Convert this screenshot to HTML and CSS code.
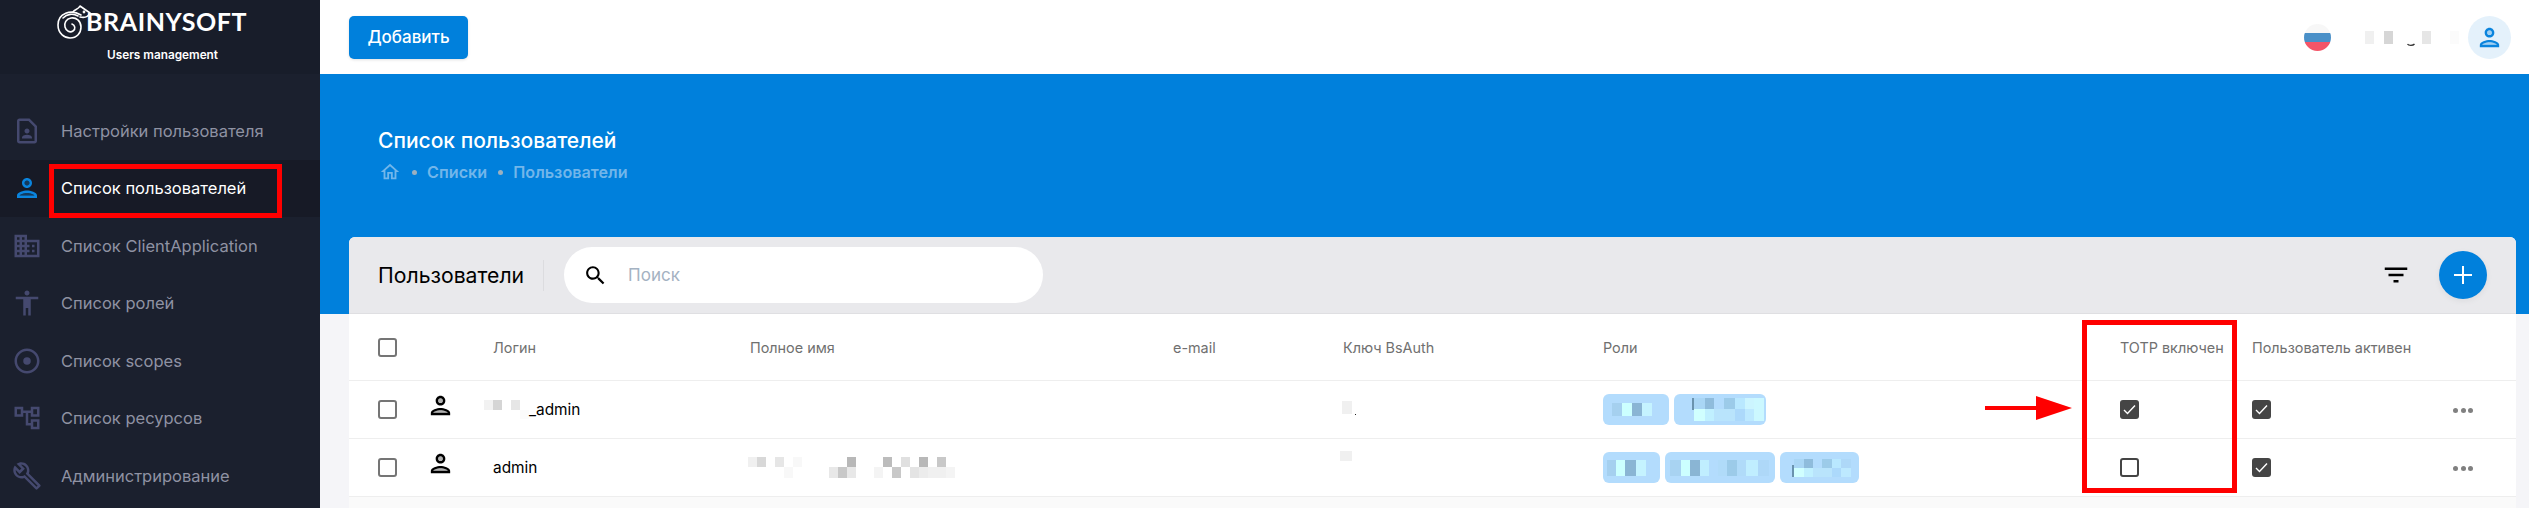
FILE: index.html
```html
<!DOCTYPE html>
<html lang="en">
<head>
<meta charset="UTF-8" />
<meta name="viewport" content="width=device-width, initial-scale=1" />
<title>Users management</title>
<link rel="stylesheet" href="styles.css">
</head>
<body>
<aside class="sidebar">
  <div class="logo">
    <div class="brand">
      <svg class="brand-mark" viewBox="0 0 34 34" width="34" height="34" fill="none" stroke="#fff" stroke-width="1.6" stroke-linecap="round" stroke-linejoin="round">
        <path d="M24 10C14 4 1 8 1 20c0 9 7 13 12 13 7 0 11-5 11-11 0-6-5-10-10-9-5 1-7 5-6 9 1 4 5 6 8 4 3-2 2-6-1-7" />
        <path d="M6 13c4-4 10-5 15-2" />
        <path d="M16 7c2-3 5-2 7-6l10 7c-2 4-6 5-10 4" />
        <circle cx="27" cy="7" r=".6" />
      </svg>
      <span class="brand-name">BRAINYSOFT</span>
    </div>
    <div class="brand-sub">Users management</div>
  </div>
  <nav class="nav">
    <a class="nav-item">
      <svg class="nav-icon" viewBox="0 0 24 24"><path d="M14 2H6c-1.100 0-2 .9-2 2v16c0 1.100.9 2 2 2h12c1.100 0 2-.9 2-2V8l-6-6zm4 18H6V4h7.170L18 8.830V20zm-6-6c1.100 0 2-.9 2-2s-.9-2-2-2-2 .9-2 2 .9 2 2 2zm4 3.430c0-.81-.48-1.530-1.220-1.850-.85-.37-1.790-.58-2.780-.58s-1.930.21-2.780.58C8.480 15.900 8 16.620 8 17.430V18h8v-.57z" /></svg>
      Настройки пользователя
    </a>
    <a class="nav-item nav-item-active">
      <svg class="nav-icon" viewBox="0 0 24 24"><use href="#person" /></svg>
      Список пользователей
      <span class="mark mark-nav"></span>
    </a>
    <a class="nav-item">
      <svg class="nav-icon" viewBox="0 0 24 24"><path d="M12 7V3H2v18h20V7H12zM6 19H4v-2h2v2zm0-4H4v-2h2v2zm0-4H4V9h2v2zm0-4H4V5h2v2zm4 12H8v-2h2v2zm0-4H8v-2h2v2zm0-4H8V9h2v2zm0-4H8V5h2v2zm10 12h-8v-2h2v-2h-2v-2h2v-2h-2V9h8v10zm-2-8h-2v2h2v-2zm0 4h-2v2h2v-2z" /></svg>
      Список ClientApplication
    </a>
    <a class="nav-item">
      <svg class="nav-icon" viewBox="0 0 24 24"><path d="M12 2c1.100 0 2 .9 2 2s-.9 2-2 2-2-.9-2-2 .9-2 2-2zm9 7h-6v13h-2v-6h-2v6H9V9H3V7h18v2z" /></svg>
      Список ролей
    </a>
    <a class="nav-item">
      <svg class="nav-icon" viewBox="0 0 24 24"><path d="M12 2C6.480 2 2 6.480 2 12s4.480 10 10 10 10-4.480 10-10S17.520 2 12 2zm0 18c-4.420 0-8-3.580-8-8s3.580-8 8-8 8 3.580 8 8-3.580 8-8 8z" /><circle cx="12" cy="12" r="3" /></svg>
      Список scopes
    </a>
    <a class="nav-item">
      <svg class="nav-icon" viewBox="0 0 24 24"><path d="M22 11V3h-7v3H9V3H2v8h7V8h2v10h4v3h7v-8h-7v3h-2V8h2v3h7zM7 9H4V5h3v4zm10 6h3v4h-3v-4zm0-10h3v4h-3V5z" /></svg>
      Список ресурсов
    </a>
    <a class="nav-item">
      <svg class="nav-icon" viewBox="0 0 24 24"><path d="M22.610 18.990l-9.080-9.080c.93-2.340.45-5.100-1.440-7C9.790.61 6.210.4 3.660 2.250L7.500 6.080 6.080 7.490 2.260 3.670C.41 6.210.62 9.790 2.920 12.080c1.860 1.860 4.570 2.350 6.890 1.480l9.110 9.110c.39.39 1.020.39 1.410 0l2.300-2.300c.4-.38.4-1.010-.02-1.380zm-3 1.600l-9.460-9.460c-.61.45-1.290.72-2 .82-1.360.2-2.790-.21-3.830-1.250C3.370 9.760 2.930 8.500 3 7.260l3.090 3.090 4.240-4.240-3.090-3.090c1.240-.07 2.490.37 3.440 1.310 1.080 1.080 1.490 2.570 1.240 3.960-.12.71-.42 1.370-.88 1.960l9.450 9.450-.88.88z" /></svg>
      Администрирование
    </a>
  </nav>
</aside>

<svg class="defs" width="0" height="0">
  <defs>
    <g id="person">
      <circle cx="12" cy="8" r="2" opacity=".3" />
      <path d="M12 16c-2.700 0-5.800 1.290-6 2h12c-.2-.71-3.300-2-6-2z" opacity=".3" />
      <path d="M12 4C9.790 4 8 5.790 8 8s1.790 4 4 4 4-1.790 4-4-1.790-4-4-4zm0 6c-1.100 0-2-.9-2-2s.9-2 2-2 2 .9 2 2-.9 2-2 2zm0 4c-2.670 0-8 1.340-8 4v2h16v-2c0-2.660-5.330-4-8-4zm-6 4c.23-.72 3.310-2 6-2 2.700 0 5.800 1.290 6 2H6z" />
    </g>
  </defs>
</svg>

<main class="main">
  <header class="topbar">
    <button class="add-btn">Добавить</button>
    <div class="topbar-right">
      <div class="flag"></div>
      <svg class="mosaic" width="94" height="16" shape-rendering="crispEdges">
        <rect x="0" y="0" width="9" height="13" fill="#f0f0f0" />
        <rect x="19" y="0" width="9" height="13" fill="#d6d6d6" />
        <rect x="57" y="0" width="9" height="13" fill="#e6e6e6" />
        <rect x="85" y="0" width="9" height="13" fill="#fbfbfb" />
        <path d="M42.500 13c1 1.800 5.500 1.800 7 0" fill="none" stroke="#333" stroke-width="1.300" shape-rendering="auto" />
      </svg>
      <div class="avatar">
        <svg class="avatar-icon" viewBox="0 0 24 24"><use href="#person" /></svg>
      </div>
    </div>
  </header>

  <section class="hero">
    <h1 class="hero-title">Список пользователей</h1>
    <div class="crumbs">
      <svg class="crumb-home" viewBox="0 0 24 24"><path d="M12 5.690l5 4.500V18h-2v-6H9v6H7v-7.810l5-4.500M12 3L2 12h3v8h6v-6h2v6h6v-8h3L12 3z" /></svg>
      <span class="crumb-dot"></span>
      <span>Списки</span>
      <span class="crumb-dot"></span>
      <span>Пользователи</span>
    </div>
  </section>

  <section class="card">
    <div class="toolbar">
      <h2 class="toolbar-title">Пользователи</h2>
      <div class="search">
        <svg class="search-icon" viewBox="0 0 24 24"><path d="M15.500 14h-.79l-.28-.27C15.410 12.590 16 11.110 16 9.500 16 5.910 13.090 3 9.500 3S3 5.910 3 9.500 5.910 16 9.500 16c1.610 0 3.090-.59 4.230-1.570l.27.28v.79l5 4.990L20.490 19l-4.990-5zm-6 0C7.010 14 5 11.990 5 9.500S7.010 5 9.500 5 14 7.010 14 9.500 11.990 14 9.500 14z" /></svg>
        <span class="search-text">Поиск</span>
      </div>
      <svg class="filter-icon" viewBox="0 0 24 24"><path d="M10 18h4v-2h-4v2zM3 6v2h18V6H3zm3 7h12v-2H6v2z" /></svg>
      <button class="fab">
        <svg width="18" height="18" viewBox="0 0 18 18" stroke="#fff" stroke-width="2"><path d="M9 0v18M0 9h18" /></svg>
      </button>
    </div>

    <div class="table">
      <div class="row row-head">
        <span class="check"></span>
        <span></span>
        <span>Логин</span>
        <span>Полное имя</span>
        <span>e-mail</span>
        <span>Ключ BsAuth</span>
        <span>Роли</span>
        <span>TOTP включен</span>
        <span>Пользователь активен</span>
        <span></span>
      </div>

      <div class="row">
        <span class="check"></span>
        <svg class="row-icon" viewBox="0 0 24 24"><use href="#person" /></svg>
        <span class="login login-masked">
          <svg width="45" height="20" shape-rendering="crispEdges">
            <rect x="0" y="0" width="9" height="10" fill="#f2f2f2" />
            <rect x="9" y="0" width="9" height="10" fill="#d5d5d5" />
            <rect x="27" y="0" width="9" height="10" fill="#e6e6e6" />
            <rect x="36" y="10" width="9" height="9" fill="#fbfbfb" />
          </svg>_admin
        </span>
        <span></span>
        <span></span>
        <svg class="key-mosaic" width="16" height="14" shape-rendering="crispEdges">
          <rect x="0" y="0" width="10" height="13" fill="#f0f0f0" />
          <rect x="13" y="13" width="1" height="1" fill="#222" />
        </svg>
        <div class="tags">
          <span class="tag tag-w66">
            <svg width="40" height="13" shape-rendering="crispEdges">
              <rect x="0" width="10" height="13" fill="#a5d0ef" />
              <rect x="10" width="10" height="13" fill="#ccffff" />
              <rect x="20" width="10" height="13" fill="#8ab5d4" />
              <rect x="30" width="10" height="13" fill="#c5f3ff" />
            </svg>
          </span>
          <span class="tag tag-w92">
            <svg width="81" height="23" shape-rendering="crispEdges">
              <rect x="9" width="2" height="12" fill="#6a93ae" />
              <rect x="11" width="11" height="11" fill="#a9d6f5" />
              <rect x="22" width="9" height="11" fill="#8fbcdc" />
              <rect x="41" width="11" height="11" fill="#9ccbe9" />
              <rect x="52" width="10" height="11" fill="#b9e8ff" />
              <rect x="62" width="9" height="11" fill="#ccf5ff" />
              <rect x="71" width="10" height="23" fill="#ccf8ff" />
              <rect x="11" y="11" width="11" height="12" fill="#d0ffff" />
              <rect x="22" y="11" width="9" height="12" fill="#c0f0ff" />
              <rect x="31" y="11" width="21" height="12" fill="#b9e4fc" />
              <rect x="52" y="11" width="10" height="12" fill="#acd9fb" />
              <rect x="62" y="11" width="9" height="12" fill="#bde9ff" />
            </svg>
          </span>
        </div>
        <span class="check check-on"><svg viewBox="0 0 19 19" fill="none" stroke="#fff" stroke-width="1.400"><path d="M4 10l3.500 3.500L15 5.500" /></svg></span>
        <span class="check check-on"><svg viewBox="0 0 19 19" fill="none" stroke="#fff" stroke-width="1.400"><path d="M4 10l3.500 3.500L15 5.500" /></svg></span>
        <span class="dots"><i></i><i></i><i></i></span>
      </div>

      <div class="row">
        <span class="check"></span>
        <svg class="row-icon" viewBox="0 0 24 24"><use href="#person" /></svg>
        <span class="login">admin</span>
        <svg class="name-mosaic" width="207" height="21" shape-rendering="crispEdges">
          <rect x="0" width="9" height="10" fill="#f0f0f0" />
          <rect x="9" width="9" height="10" fill="#d8d8d8" />
          <rect x="27" width="9" height="10" fill="#e6e6e6" />
          <rect x="45" width="9" height="10" fill="#f8f8f8" />
          <rect x="99" width="9" height="10" fill="#b8b8b8" />
          <rect x="135" width="9" height="10" fill="#bcbcbc" />
          <rect x="153" width="9" height="10" fill="#e0e0e0" />
          <rect x="171" width="9" height="10" fill="#b8b8b8" />
          <rect x="189" width="9" height="10" fill="#c8c8c8" />
          <rect x="36" y="10" width="9" height="11" fill="#f8f8f8" />
          <rect x="81" y="10" width="9" height="11" fill="#e8e8e8" />
          <rect x="90" y="10" width="9" height="11" fill="#c8c8c8" />
          <rect x="99" y="10" width="9" height="11" fill="#e8e8e8" />
          <rect x="126" y="10" width="9" height="11" fill="#f4f4f4" />
          <rect x="144" y="10" width="9" height="11" fill="#c8c8c8" />
          <rect x="162" y="10" width="9" height="11" fill="#e4e4e4" />
          <rect x="171" y="10" width="9" height="11" fill="#ececec" />
          <rect x="180" y="10" width="18" height="11" fill="#f0f0f0" />
          <rect x="198" y="10" width="9" height="11" fill="#f4f4f4" />
        </svg>
        <span></span>
        <svg class="key-mosaic key-mosaic-2" width="12" height="10" shape-rendering="crispEdges">
          <rect width="12" height="10" fill="#f0f0f0" />
        </svg>
        <div class="tags">
          <span class="tag tag-w57">
            <svg width="39" height="16" shape-rendering="crispEdges">
              <rect x="0" width="9" height="16" fill="#a5d0ef" />
              <rect x="9" width="9" height="16" fill="#ccffff" />
              <rect x="18" width="11" height="16" fill="#8ab5d4" />
              <rect x="29" width="10" height="16" fill="#c5f3ff" />
            </svg>
          </span>
          <span class="tag tag-w110">
            <svg width="99" height="16" shape-rendering="crispEdges">
              <rect x="0" width="11" height="16" fill="#a8d3f2" />
              <rect x="11" width="9" height="16" fill="#ccffff" />
              <rect x="20" width="10" height="16" fill="#8ab5d4" />
              <rect x="30" width="9" height="16" fill="#c0eeff" />
              <rect x="48" width="9" height="16" fill="#b0dbf9" />
              <rect x="57" width="10" height="16" fill="#9ccbe9" />
              <rect x="67" width="9" height="16" fill="#b0dbf9" />
              <rect x="76" width="12" height="16" fill="#c0eeff" />
              <rect x="88" width="11" height="16" fill="#aed8f8" />
            </svg>
          </span>
          <span class="tag tag-w79">
            <svg width="70" height="18" shape-rendering="crispEdges">
              <rect x="10" width="10" height="9" fill="#a9d6f5" />
              <rect x="20" width="9" height="9" fill="#8fbcdc" />
              <rect x="38" width="10" height="9" fill="#9ccbe9" />
              <rect x="48" width="9" height="9" fill="#b9e8ff" />
              <rect x="57" width="10" height="9" fill="#aed8f8" />
              <rect x="10" y="9" width="10" height="9" fill="#d0ffff" />
              <rect x="20" y="9" width="9" height="9" fill="#c0f0ff" />
              <rect x="29" y="9" width="19" height="9" fill="#b9e4fc" />
              <rect x="48" y="9" width="9" height="9" fill="#acd9fb" />
              <rect x="57" y="9" width="10" height="9" fill="#bde9ff" />
              <rect x="8" y="6" width="2" height="12" fill="#6a93ae" />
            </svg>
          </span>
        </div>
        <span class="check check-dark"></span>
        <span class="check check-on"><svg viewBox="0 0 19 19" fill="none" stroke="#fff" stroke-width="1.400"><path d="M4 10l3.500 3.500L15 5.500" /></svg></span>
        <span class="dots"><i></i><i></i><i></i></span>
      </div>

      <span class="mark mark-col"></span>
      <svg class="arrow" width="87" height="24" viewBox="0 0 87 24" fill="#f00"><path d="M0 10h51V0l36 12-36 12V14H0z" /></svg>
    </div>
  </section>
</main>
</body>
</html>
```

FILE: styles.css
```css
* {
  box-sizing: border-box;
}
html, body {
  height: 100%;
}
body {
  margin: 0;
  display: flex;
  overflow: hidden;
  background: #f5f5f8;
  color: #000;
  font-family: Inter, "Noto Sans", sans-serif;
}
.defs {
  position: absolute;
}
/* Sidebar */
.sidebar {
  width: 320px;
  flex-shrink: 0;
  background: #1b202e;
}
.logo {
  height: 74px;
  background: #181d2a;
  padding: 5px 0 0 57px;
  color: #fff;
}
.brand {
  display: flex;
  align-items: center;
  height: 34px;
}
.brand-name {
  margin: 0 0 3px -5px;
  font-family: Lato, sans-serif;
  font-size: 25px;
  font-weight: 700;
  letter-spacing: 0.6px;
}
.brand-sub {
  margin: 9px 0 0 50px;
  font-size: 11.8px;
  font-weight: 600;
}
.nav {
  margin-top: 28px;
}
.nav-item {
  position: relative;
  display: flex;
  align-items: center;
  height: 57.5px;
  padding-left: 12px;
  color: #8f92a3;
  font-size: 16.5px;
}
.nav-icon {
  width: 30px;
  height: 30px;
  margin-right: 19px;
  fill: #45496f;
}
.nav-item-active {
  background: #171a26;
  color: #fff;
}
.nav-item-active .nav-icon {
  fill: #0a84dd;
}
.mark {
  position: absolute;
  border: 5px solid #f00;
}
.mark-nav {
  left: 49px;
  top: 4px;
  width: 233px;
  height: 54px;
}
/* Top bar */
.main {
  flex: 1;
  min-width: 0;
}
.topbar {
  display: flex;
  align-items: center;
  justify-content: space-between;
  height: 74px;
  padding: 0 18px 0 29px;
  background: #fff;
}
.add-btn {
  width: 119px;
  height: 43px;
  border: none;
  border-radius: 5px;
  background: #0080dc;
  color: #fff;
  font-family: inherit;
  font-size: 17px;
  font-weight: 500;
  box-shadow: 0 1px 3px rgba(0, 0, 0, 0.12);
}
.topbar-right {
  display: flex;
  align-items: center;
}
.flag {
  width: 27px;
  height: 27px;
  margin-right: 34px;
  border-radius: 50%;
  background: linear-gradient(#f7f7f7 33%, #4a90c8 33%, #4a90c8 66%, #f45568 66%);
}
.mosaic {
  margin: 4px 9px 0 0;
}
.avatar {
  display: flex;
  align-items: center;
  justify-content: center;
  width: 43px;
  height: 43px;
  border-radius: 50%;
  background: #e4f1fb;
}
.avatar-icon {
  width: 29px;
  height: 29px;
  fill: #0a84dd;
}
/* Blue header */
.hero {
  height: 240px;
  padding: 54px 29px 0 58px;
  background: #0080dc;
  color: #fff;
}
.hero-title {
  margin: 0;
  font-size: 21px;
  font-weight: 500;
  line-height: 26px;
}
.crumbs {
  display: flex;
  align-items: center;
  gap: 10.5px;
  margin-top: 8px;
  height: 20px;
  color: #72b6ea;
  font-size: 16.2px;
  font-weight: 600;
}
.crumb-home {
  width: 22px;
  height: 22px;
  margin-left: 1px;
  fill: #72b6ea;
}
.crumb-dot {
  width: 5px;
  height: 5px;
  border-radius: 50%;
  background: #9bb0c0;
}
/* Card */
.card {
  position: relative;
  height: 271px;
  margin: -77px 13px 0 29px;
  border-radius: 6px 6px 0 0;
  overflow: hidden;
  background: #fafafa;
}
.toolbar {
  display: flex;
  align-items: center;
  height: 77px;
  padding: 0 29px;
  background: #e9e9ec;
  border-bottom: 1px solid #dfdfe2;
}
.toolbar-title {
  margin: 0;
  padding-right: 19px;
  border-right: 1px solid #dcdcdf;
  font-size: 21.2px;
  font-weight: 400;
  line-height: 31px;
}
.search {
  display: flex;
  align-items: center;
  width: 479px;
  height: 56px;
  margin-left: 20px;
  padding-left: 19px;
  border-radius: 28px;
  background: #fff;
}
.search-icon {
  width: 25px;
  height: 25px;
}
.search-text {
  margin-left: 20px;
  color: #a4b2c2;
  font-size: 17px;
}
.filter-icon {
  width: 30px;
  height: 30px;
  margin-left: auto;
}
.fab {
  display: flex;
  align-items: center;
  justify-content: center;
  width: 48px;
  height: 48px;
  margin: 0 0 0 28px;
  padding: 0;
  border: none;
  border-radius: 50%;
  background: #0080dc;
  box-shadow: 0 2px 6px rgba(0, 0, 0, 0.06);
}
/* Table */
.table {
  position: relative;
}
.row {
  display: grid;
  grid-template-columns: 52px 63px 257px 423px 170px 260px 517px 132px 201px 1fr;
  align-items: center;
  height: 58px;
  padding-left: 29px;
  background: #fff;
  border-bottom: 1px solid #eee;
  font-size: 15.4px;
}
.row-head {
  height: 67px;
  color: #707070;
  font-size: 14.4px;
}
.check {
  display: block;
  width: 19px;
  height: 19px;
  border: 2px solid #757575;
  border-radius: 3px;
  background: #fff;
}
.check svg {
  display: block;
  width: 19px;
  height: 19px;
}
.check-on {
  border: none;
  background: #454545;
}
.check-dark {
  border-color: #444;
}
.row-icon {
  width: 29px;
  height: 29px;
  margin: -8px 0 0 -4px;
}
.login {
  display: flex;
  align-items: center;
}
.login-masked {
  margin-left: -9px;
}
.tags {
  display: flex;
  gap: 5px;
}
.tag {
  display: flex;
  align-items: center;
  height: 31px;
  padding-left: 9px;
  border-radius: 6px;
  background: #b3dcfd;
}
.tag-w66 { width: 66px; }
.tag-w92 { width: 92px; }
.tag-w57 { width: 57px; padding-left: 4px; }
.tag-w110 { width: 110px; padding-left: 5px; }
.tag-w79 { width: 79px; padding-left: 4px; }
.name-mosaic {
  margin-left: -2px;
}
.key-mosaic {
  margin-top: -3px;
  margin-left: -1px;
}
.key-mosaic-2 {
  margin: -24px 0 0 -3px;
}
.dots {
  display: flex;
  gap: 2.5px;
  padding-top: 2px;
}
.dots i {
  width: 5px;
  height: 5px;
  border-radius: 50%;
  background: #808080;
}
.mark-col {
  left: 1733px;
  top: 6px;
  width: 155px;
  height: 173px;
}
.arrow {
  position: absolute;
  left: 1636px;
  top: 82px;
}
```
